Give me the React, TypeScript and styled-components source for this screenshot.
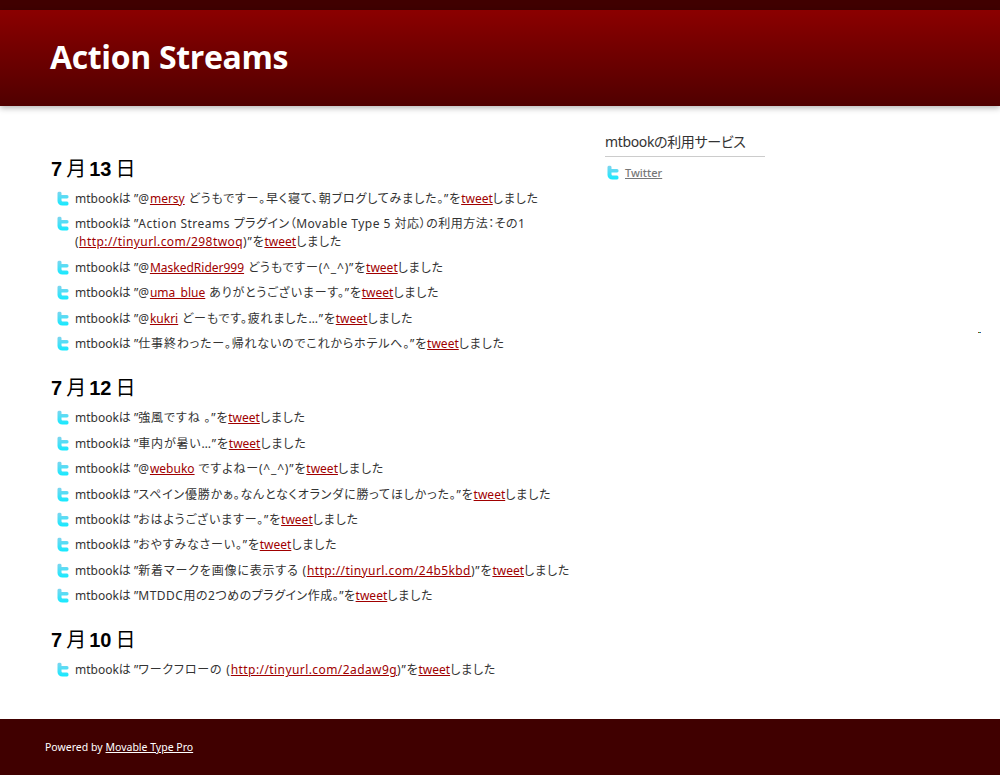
import React from 'react';
import styled, { createGlobalStyle } from 'styled-components';

const GlobalStyle = createGlobalStyle`
    html, body {
        margin: 0;
        padding: 0;
        background: #fff;
    }
    body {
        font-family: "Noto Sans", "Noto Sans CJK JP", sans-serif;
        font-feature-settings: "palt";
    }
`;

const Page = styled.div`
    position: relative;
    display: flex;
    flex-direction: column;
    min-height: 775px;
    border-top: 10px solid #400000;
    box-sizing: border-box;
`;
const Header = styled.header`
    height: 96px;
    padding: 0 50px 4px;
    box-sizing: border-box;
    display: flex;
    align-items: center;
    background: linear-gradient(#8b0000, #500000);
    box-shadow: 0 2px 6px rgba(0, 0, 0, 0.3);
`;
const Title = styled.h1`
    margin: 0;
    color: #fff;
    font-family: "Open Sans", "Noto Sans", sans-serif;
    font-size: 32px;
    font-weight: 700;
    letter-spacing: -0.35px;
`;
const Content = styled.div`
    flex: 1;
    display: flex;
    padding: 0 50px;
`;
const Main = styled.main`
    width: 555px;
    padding-top: 50px;
`;
const DayTitle = styled.h2`
    margin: 0 0 8px;
    padding-left: 1px;
    height: 26px;
    line-height: 26px;
    color: #000;
    font-size: 20px;
    font-weight: 700;
    font-family: "Liberation Sans", "Noto Sans CJK JP", sans-serif;
`;
const DayUnit = styled.span`
    font-weight: 400;
    margin: 0 3px 0 4px;
`;
const EntryList = styled.ul`
    list-style: none;
    margin: 0 0 15px;
    padding: 0;
`;
const Entry = styled.li`
    position: relative;
    width: 500px;
    padding: 0 0 7.4px 25px;
    color: #333;
    font-size: 12px;
    line-height: 18px;
`;
const IconSlot = styled.span`
    position: absolute;
    left: 7px;
    top: 1px;
`;
const EntryText = styled.span<{ $tight?: boolean }>`
    letter-spacing: ${props => (props.$tight ? '0.5px' : '0.82px')};
`;
const EntryLink = styled.a<{ $url?: boolean }>`
    color: #a00000;
    text-decoration: underline;
    letter-spacing: ${props => (props.$url ? '0.42px' : '0')};
`;
const Sidebar = styled.aside`
    width: 160px;
    padding-top: 26px;
`;
const SideTitle = styled.h3`
    margin: 0;
    height: 24px;
    line-height: 20px;
    font-size: 14px;
    font-weight: 400;
    color: #333;
    letter-spacing: -0.35px;
    border-bottom: 1px solid #ccc;
`;
const ServiceRow = styled.div`
    display: flex;
    align-items: center;
    gap: 6px;
    margin-top: 8px;
    padding-left: 2px;
`;
const ServiceLink = styled.a`
    color: #777;
    font-size: 11px;
    font-weight: 500;
    text-decoration: underline;
`;
const Footer = styled.footer`
    height: 56px;
    padding: 0 45px;
    display: flex;
    align-items: center;
    background: #400000;
    color: #fff;
    font-size: 10.5px;
`;
const FooterLink = styled.a`
    color: #fff;
    margin-left: 3px;
    text-decoration: underline;
`;
const StrayMark = styled.span`
    position: absolute;
    left: 978px;
    top: 322px;
    width: 3px;
    height: 1px;
    background: linear-gradient(90deg, #e00000, #20a040, #2040e0);
`;

const BirdIcon: React.FC = () => (
    <svg width="12" height="15" viewBox="0 0 12 15">
        <defs>
            <linearGradient id="bird" x1="0" y1="0" x2="0" y2="1">
                <stop offset="0" stopColor="#80d4ee" />
                <stop offset="1" stopColor="#14eaff" />
            </linearGradient>
        </defs>
        <path
            d="M0.5 2C0.5 .3 4.5 .3 4.5 2V4H10C12 4 12 7.5 10 7.5H4.5V9C4.5 10 5 10.5 6 10.5H10C12 10.5 12 14.5 10 14.5H5.5C2.5 14.5 .5 12.5 .5 10Z"
            fill="url(#bird)"
        />
    </svg>
);

type Part = string | { text: string } | { link: string; url?: boolean };

const tweet = { link: 'tweet' };

const days: { month: string; day: string; entries: Part[][] }[] = [
    {
        month: '7',
        day: '13',
        entries: [
            ['@', { link: 'mersy' }, ' どうもですー。早く寝て、朝ブログしてみました。”を', tweet],
            [{ text: 'Action Streams プラグイン（Movable Type 5 対応）の利用方法：その1 (' }, { link: 'http://tinyurl.com/298twoq', url: true }, ')”を', tweet],
            ['@', { link: 'MaskedRider999' }, ' どうもですー(^_^)”を', tweet],
            ['@', { link: 'uma_blue' }, ' ありがとうございまーす。”を', tweet],
            ['@', { link: 'kukri' }, ' どーもです。疲れました…”を', tweet],
            ['仕事終わったー。帰れないのでこれからホテルへ。”を', tweet]
        ]
    },
    {
        month: '7',
        day: '12',
        entries: [
            ['強風ですね 。”を', tweet],
            ['車内が暑い…”を', tweet],
            ['@', { link: 'webuko' }, ' ですよねー(^_^)”を', tweet],
            ['スペイン優勝かぁ。なんとなくオランダに勝ってほしかった。”を', tweet],
            ['おはようございますー。”を', tweet],
            ['おやすみなさーい。”を', tweet],
            ['新着マークを画像に表示する (', { link: 'http://tinyurl.com/24b5kbd', url: true }, ')”を', tweet],
            [{ text: 'MTDDC用の2つめのプラグイン作成。”を' }, tweet]
        ]
    },
    {
        month: '7',
        day: '10',
        entries: [
            ['ワークフローの (', { link: 'http://tinyurl.com/2adaw9g', url: true }, ')”を', tweet]
        ]
    }
];

const renderPart = (part: Part, key: number) => {
    if (typeof part === 'string') {
        return <EntryText key={key}>{part}</EntryText>;
    }
    if ('text' in part) {
        return (
            <EntryText key={key} $tight>
                {part.text}
            </EntryText>
        );
    }
    return (
        <EntryLink key={key} href="#" $url={part.url}>
            {part.link}
        </EntryLink>
    );
};

const App: React.FC = () => (
    <Page>
        <GlobalStyle />
        <Header>
            <Title>Action Streams</Title>
        </Header>
        <Content>
            <Main>
                {days.map(d => (
                    <section key={d.day}>
                        <DayTitle>
                            {d.month}
                            <DayUnit>月</DayUnit>
                            {d.day}
                            <DayUnit>日</DayUnit>
                        </DayTitle>
                        <EntryList>
                            {d.entries.map((parts, i) => (
                                <Entry key={i}>
                                    <IconSlot>
                                        <BirdIcon />
                                    </IconSlot>
                                    mtbookは ”{parts.map(renderPart)}
                                    <EntryText>しました</EntryText>
                                </Entry>
                            ))}
                        </EntryList>
                    </section>
                ))}
            </Main>
            <Sidebar>
                <SideTitle>mtbookの利用サービス</SideTitle>
                <ServiceRow>
                    <BirdIcon />
                    <ServiceLink href="#">Twitter</ServiceLink>
                </ServiceRow>
            </Sidebar>
        </Content>
        <Footer>
            Powered by <FooterLink href="#">Movable Type Pro</FooterLink>
        </Footer>
        <StrayMark />
    </Page>
);

export default App;
